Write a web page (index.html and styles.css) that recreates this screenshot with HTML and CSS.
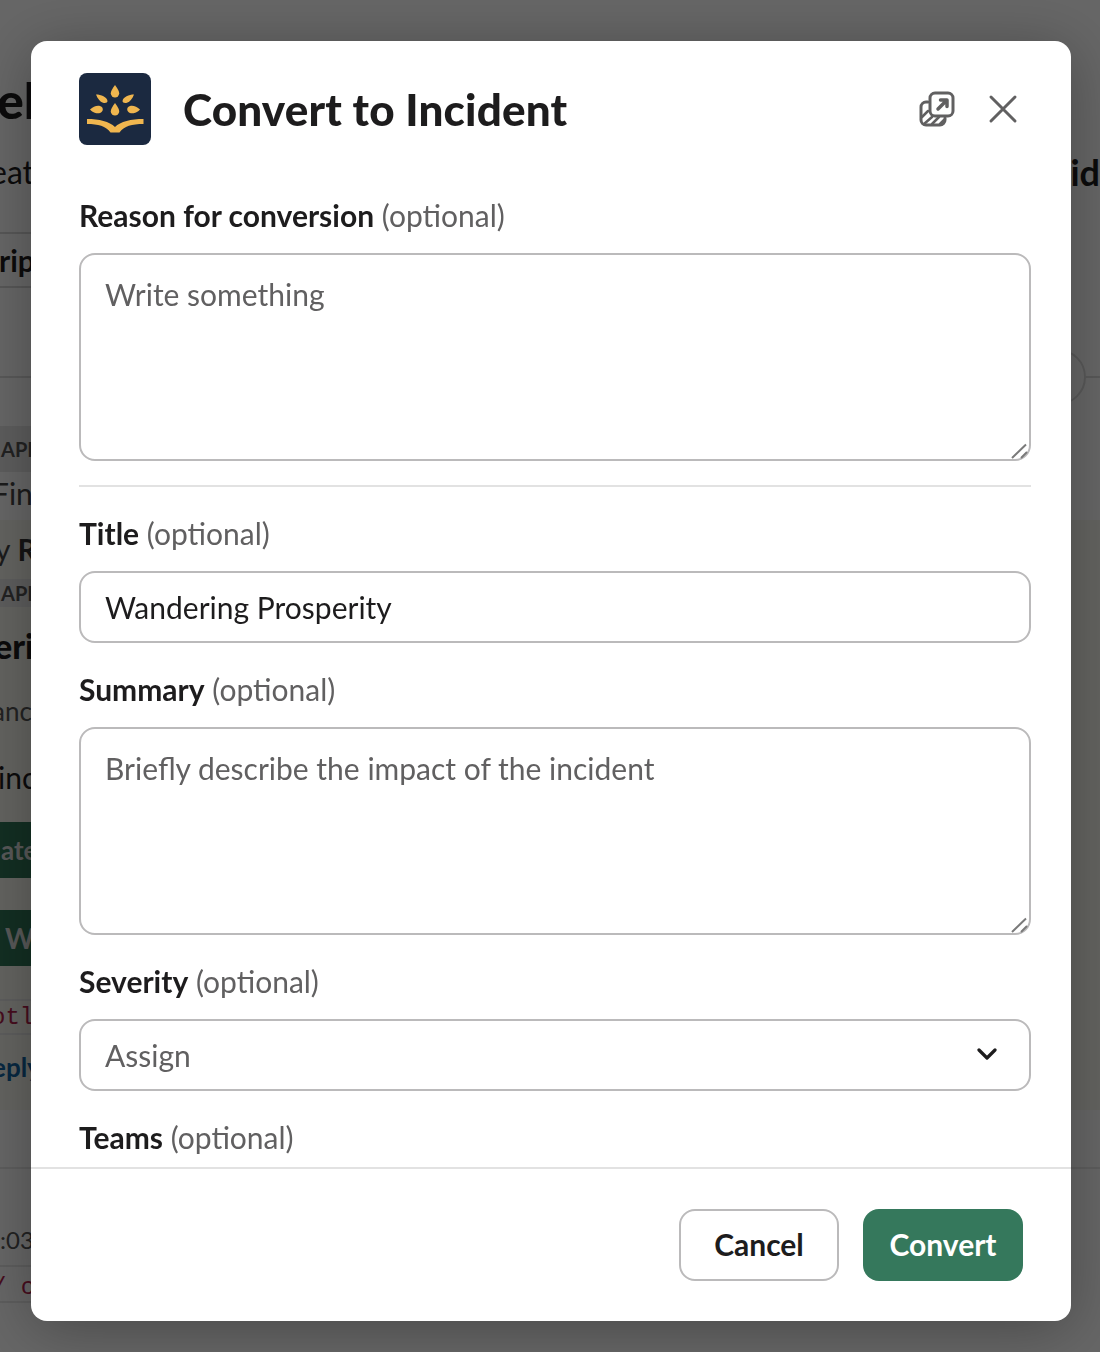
FILE: index.html
```html
<!DOCTYPE html>
<html lang="en">
<head>
<meta charset="utf-8">
<title>Convert to Incident</title>
<link rel="stylesheet" href="styles.css">
</head>
<body>
<div class="page">
  <div class="row row-h1"><span class="t-h1">el</span></div>
  <div class="row row-sub"><span class="t-sub">eat</span><span class="t-right">id</span></div>
  <div class="row row-tab"><span class="t-tab">rip</span></div>
  <div class="row row-rule"><span class="circle"></span></div>
  <div class="row row-api"><span class="t-api">API</span></div>
  <div class="row row-fin"><span class="t-fin">Fin</span></div>
  <div class="warm">
    <div class="row row-by"><span class="t-by">y <b>R</b></span></div>
    <div class="row row-api2"><span class="t-api">API</span></div>
    <div class="row row-eri"><span class="t-eri">eri</span></div>
    <div class="row row-anc"><span class="t-small">anc</span></div>
    <div class="row row-inc"><span class="t-inc">inc</span></div>
    <div class="row row-green1"><span class="t-green">ate</span></div>
    <div class="row row-green2"><span class="t-green t-green-w">W</span></div>
    <div class="row row-code"><span class="t-code">otl</span></div>
    <div class="row row-reply"><span class="t-reply">eply</span></div>
  </div>
  <div class="row row-time"><span class="t-time">:03</span></div>
  <div class="row row-code2"><span class="t-code t-code2">/ c</span></div>
</div>

<div class="scrim">
  <div class="modal">
    <header class="modal-head">
      <svg class="logo" viewBox="0 0 72 72" aria-hidden="true">
        <rect width="72" height="72" rx="8" fill="#1b2940"/>
        <g fill="#f0b64f">
          <path d="M36 12C39 16 40.2 18.4 40.2 20.2A4.2 4.2 0 0 1 31.8 20.2C31.8 18.4 33 16 36 12Z"/>
          <path d="M36 30C39 34 40.2 36.4 40.2 38.4A4.2 4.2 0 0 1 31.8 38.4C31.8 36.4 33 34 36 30Z"/>
          <path d="M17 21.5C22 21.5 28 24 28.5 28C28.6 29.6 26.4 30.4 24 29.7C21 28.8 18.6 25.8 17 21.5Z"/>
          <path d="M55 21.5C50 21.5 44 24 43.5 28C43.4 29.6 45.6 30.4 48 29.7C51 28.8 53.4 25.8 55 21.5Z"/>
          <path d="M11 36.5C14 33.5 18 32.2 21 33C23.4 33.7 24.2 35.5 23.6 37.4C22.8 39.6 20 40.6 17.4 40.2C15 39.8 13 38.6 11 36.5Z"/>
          <path d="M61 36.5C58 33.5 54 32.2 51 33C48.6 33.7 47.8 35.5 48.4 37.4C49.2 39.6 52 40.6 54.6 40.2C57 39.8 59 38.6 61 36.5Z"/>
          <path d="M8 46C20 46 30.500 48.500 36 54C41.500 48.500 52 46 64.500 46V51C53 51 45 53 40.500 59.500H31.500C27 53 19 51 8 51Z"/>
        </g>
      </svg>
      <h1 class="modal-title">Convert to Incident</h1>
      <svg class="icon-pop" viewBox="0 0 40 40" aria-hidden="true">
        <g fill="none" stroke="#616061" stroke-width="3" stroke-linecap="round" stroke-linejoin="round">
          <rect x="13" y="4" width="23" height="23" rx="5"/>
          <path d="M11 13H9A5 5 0 0 0 4 18V31A5 5 0 0 0 9 36H23A5 5 0 0 0 28 31V29"/>
          <path stroke-width="3.500" d="M21 20L29.500 11.500M23.500 11H30V17.500"/>
          <path stroke-width="2.500" d="M5 28L11 22M7 35L15 28M15 35L22 28M23 35L27 31"/>
        </g>
      </svg>
      <svg class="icon-close" viewBox="0 0 30 30" aria-hidden="true">
        <path d="M3 3L27 27M27 3L3 27" fill="none" stroke="#616061" stroke-width="3" stroke-linecap="round"/>
      </svg>
    </header>

    <div class="modal-body">
      <div class="field">
        <label class="label"><b>Reason for conversion</b> <span class="opt">(optional)</span></label>
        <div class="area-wrap">
          <textarea class="control area" placeholder="Write something"></textarea>
          <svg class="grip" viewBox="0 0 18 16" aria-hidden="true"><path d="M1 15L15 1.500M10 15L16 9" fill="none" stroke="#7a7a7a" stroke-width="2"/></svg>
        </div>
      </div>
      <hr class="divider">
      <div class="field">
        <label class="label"><b>Title</b> <span class="opt">(optional)</span></label>
        <input class="control line" value="Wandering Prosperity">
      </div>
      <div class="field">
        <label class="label"><b>Summary</b> <span class="opt">(optional)</span></label>
        <div class="area-wrap">
          <textarea class="control area" placeholder="Briefly describe the impact of the incident"></textarea>
          <svg class="grip" viewBox="0 0 18 16" aria-hidden="true"><path d="M1 15L15 1.500M10 15L16 9" fill="none" stroke="#7a7a7a" stroke-width="2"/></svg>
        </div>
      </div>
      <div class="field">
        <label class="label"><b>Severity</b> <span class="opt">(optional)</span></label>
        <div class="control select">
          <span>Assign</span>
          <svg class="chev" viewBox="0 0 20 12" aria-hidden="true"><path d="M2 2L10 10L18 2" fill="none" stroke="#1d1c1d" stroke-width="3.200" stroke-linecap="round" stroke-linejoin="round"/></svg>
        </div>
      </div>
      <div class="field">
        <label class="label"><b>Teams</b> <span class="opt">(optional)</span></label>
      </div>
    </div>

    <footer class="modal-foot">
      <button class="btn btn-cancel">Cancel</button>
      <button class="btn btn-go">Convert</button>
    </footer>
  </div>
</div>
</body>
</html>
```
FILE: styles.css
```css
* { box-sizing: border-box; }
html, body { margin: 0; height: 100%; overflow: hidden; }
body { font-family: "Lato", "Noto Sans", sans-serif; color: #1d1c1d; background: #fff; }

/* page behind the dialog */
.page { width: 1100px; height: 1352px; display: flex; flex-direction: column; padding-top: 70px; overflow: hidden; background: #fff; }
.row { display: flex; justify-content: space-between; align-items: center; white-space: nowrap; flex: none; width: 1100px; }
.row-h1 { height: 60px; }
.row-sub { height: 46px; margin-top: 20px; }
.row-tab { height: 56px; margin-top: 36px; width: 40px; border-top: 2px solid #d8d8d8; border-bottom: 2px solid #d8d8d8; }
.row-rule { height: 2px; margin-top: 88px; background: #ddd; justify-content: flex-end; }
.circle { width: 56px; height: 56px; border: 2px solid #ddd; border-radius: 50%; background: #fff; margin-right: 14px; flex: none; }
.row-api { height: 46px; margin-top: 48px; }
.row-fin { height: 44px; margin-top: -1px; }
.warm { background: #f8f8f0; margin-top: 5px; height: 590px; padding-top: 7px; flex: none; }
.row-by { height: 44px; }
.row-api2 { height: 28px; margin-top: 8px; }
.row-eri { height: 46px; margin-top: 15px; }
.row-anc { height: 36px; margin-top: 25px; }
.row-inc { height: 44px; margin-top: 26px; }
.row-green1, .row-green2 { height: 56px; width: 40px; background: #2f7557; justify-content: flex-start; }
.row-green1 { margin-top: 23px; }
.row-green2 { margin-top: 32px; }
.row-code { height: 36px; margin-top: 33px; width: 40px; border-top: 2px solid #e8e8e8; border-bottom: 2px solid #e8e8e8; }
.row-reply { height: 40px; margin-top: 12px; }
.row-time { height: 98px; margin-top: 57px; width: 1100px; border-top: 2px solid #e8e8e8; padding-top: 44px; }
.row-code2 { height: 38px; width: 40px; padding-top: 6px; border-top: 2px solid #e8e8e8; border-bottom: 2px solid #e8e8e8; }

.t-h1 { font-size: 50px; font-weight: 900; color: #1d1c1d; margin-left: -3px; }
.t-sub { font-size: 32px; color: #1d1c1d; margin-left: -10px; margin-top: -3px; }
.t-right { font-size: 36px; font-weight: 700; color: #1d1c1d; margin-top: -3px; }
.t-tab { font-size: 30px; font-weight: 700; margin-left: -1px; }
.t-api { font-size: 20px; font-weight: 700; background: #e8e8e8; color: #555; padding: 2px 10px 2px 1px; height: 46px; line-height: 42px; width: 40px; }
.row-api2 .t-api { height: 28px; line-height: 24px; }
.t-fin { font-size: 30px; color: #444; margin-left: -8px; }
.t-by { font-size: 30px; color: #444; margin-left: -5px; }
.t-by b { color: #333; }
.t-inc { font-size: 30px; color: #1d1c1d; margin-left: -2px; }
.t-eri { font-size: 34px; font-weight: 900; color: #1d1c1d; margin-left: -6px; }
.t-small { font-size: 26px; color: #555; margin-left: -8px; }
.t-green { font-size: 26px; font-weight: 700; color: #ddd; margin-left: 1px; }
.t-green-w { margin-left: 5px; font-size: 28px; }
.t-code { font-family: "Liberation Mono", monospace; font-size: 24px; color: #b01e4c; margin-left: -9px; }
.t-code2 { margin-left: -8px; }
.t-reply { font-size: 26px; font-weight: 700; color: #1264a3; margin-left: -8px; }
.t-time { font-size: 24px; color: #555; }

/* dialog */
.scrim { position: fixed; inset: 0; background: rgba(0, 0, 0, .6); padding: 41px 0 0 31px; }
.modal { width: 1040px; height: 1280px; background: #fff; border-radius: 16px; display: flex; flex-direction: column; overflow: hidden; box-shadow: 0 8px 60px rgba(0, 0, 0, .3); }
.modal-head { display: flex; flex: none; padding: 32px 48px 0; height: 152px; align-items: flex-start; }
.logo { width: 72px; height: 72px; flex: none; }
.modal-title { margin: 6px 0 0 32px; font-size: 44px; line-height: 60px; font-weight: 900; flex: 1; letter-spacing: .16px; }
.icon-pop { width: 40px; height: 40px; flex: none; margin: 16px 0 0 0; }
.icon-close { width: 30px; height: 30px; flex: none; margin: 21px 5px 0 31px; }

.modal-body { flex: 1; min-height: 0; overflow: hidden; padding: 0 40px 0 48px; }
.field { margin-bottom: 24px; }
.label { display: block; font-size: 30px; line-height: 44px; margin-bottom: 16px; }
.label b { font-weight: 700; }
.opt { color: #616061; }
.control { display: block; width: 100%; border: 2px solid #bbbabb; border-radius: 16px; background: #fff; font: 30px/44px "Lato", "Noto Sans", sans-serif; color: #1d1c1d; padding: 0 24px; outline: 0; margin: 0; }
.area-wrap { position: relative; }
.area { height: 208px; padding-top: 17px; resize: none; }
.area::placeholder { color: #616061; opacity: 1; }
.line { height: 72px; }
.select { height: 72px; display: flex; align-items: center; justify-content: space-between; color: #616061; }
.chev { width: 20px; height: 12px; flex: none; margin: -2px 8px 0 0; }
.grip { position: absolute; right: 2px; bottom: 2px; width: 18px; height: 16px; }
.divider { border: 0; height: 2px; background: #e2e2e2; margin: 24px 0; }

.modal-foot { flex: none; height: 154px; border-top: 2px solid #e2e2e2; padding: 40px 48px; display: flex; justify-content: flex-end; gap: 24px; }
.btn { width: 160px; height: 72px; border-radius: 16px; font: 700 30px/1 "Lato", "Noto Sans", sans-serif; padding: 0 0 2px; margin: 0; }
.btn-cancel { background: #fff; border: 2px solid #bbbabb; color: #1d1c1d; }
.btn-go { background: #35785c; border: 0; color: #fff; }
```
